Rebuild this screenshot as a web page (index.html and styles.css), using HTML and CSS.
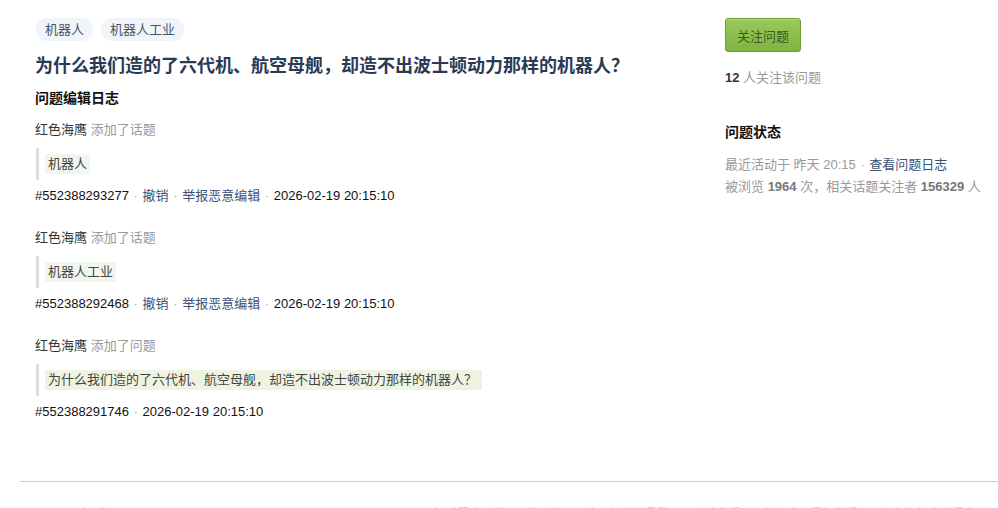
FILE: index.html
```html
<!DOCTYPE HTML>
<html lang="zh-CN">
<head>
<meta charset="utf-8" />
<meta name="viewport" content="width=device-width, initial-scale=1.0">
<title>问题编辑日志</title>
<link rel="stylesheet" href="styles.css">
</head>
<body>
<div class="wrap">
  <div class="main">
    <div class="tags">
      <a class="tag" href="#">机器人</a>
      <a class="tag" href="#">机器人工业</a>
    </div>
    <h1 class="title">为什么我们造的了六代机、航空母舰，却造不出波士顿动力那样的机器人？</h1>
    <h2 class="sub">问题编辑日志</h2>

    <div class="log">
      <div class="who">红色海鹰 <span class="act">添加了话题</span></div>
      <div class="quote"><span class="hl">机器人</span></div>
      <div class="meta">#552388293277 <span class="dot">·</span> <a href="#">撤销</a> <span class="dot">·</span> <a href="#">举报恶意编辑</a> <span class="dot">·</span> 2026-02-19 20:15:10</div>
    </div>

    <div class="log">
      <div class="who">红色海鹰 <span class="act">添加了话题</span></div>
      <div class="quote"><span class="hl">机器人工业</span></div>
      <div class="meta">#552388292468 <span class="dot">·</span> <a href="#">撤销</a> <span class="dot">·</span> <a href="#">举报恶意编辑</a> <span class="dot">·</span> 2026-02-19 20:15:10</div>
    </div>

    <div class="log">
      <div class="who">红色海鹰 <span class="act">添加了问题</span></div>
      <div class="quote"><span class="hl ins">为什么我们造的了六代机、航空母舰，却造不出波士顿动力那样的机器人？</span></div>
      <div class="meta">#552388291746 <span class="dot">·</span> 2026-02-19 20:15:10</div>
    </div>
  </div>

  <div class="side">
    <button class="follow">关注问题</button>
    <p class="count"><b>12</b> 人关注该问题</p>
    <h3 class="side-title">问题状态</h3>
    <p class="stat">最近活动于 昨天 20:15 <span class="dot">·</span> <a href="#">查看问题日志</a></p>
    <p class="stat">被浏览 <b>1964</b> 次，相关话题关注者 <b>156329</b> 人</p>
  </div>
</div>

<div class="footer">
  <span>© 2026 知乎</span>
  <span class="links">知乎圆桌 · 发现 · 移动应用 · 使用机构帐号登录 · 联系我们 · 工作机会 · 侵权举报 · 网上有害信息举报专区</span>
</div>
</body>
</html>
```

FILE: styles.css
```css
body {
  margin: 0;
  font-family: "Liberation Sans", "Noto Sans CJK SC", sans-serif;
  font-size: 13px;
  color: #222;
  background: #fff;
}
a {
  text-decoration: none;
  color: #3d5377;
}
.wrap {
  display: flex;
  padding: 18px 0 0 35px;
  height: 481px;
  box-sizing: border-box;
}
.main {
  width: 690px;
}
.side {
  width: 260px;
}

/* topic tags */
.tags {
  display: flex;
  gap: 8px;
  margin-left: 1px;
}
.tag {
  display: block;
  height: 23px;
  line-height: 23px;
  padding: 0 9px;
  border-radius: 12px;
  background: #eff5fa;
  color: #4a5666;
}
.title {
  margin: 12px 0 0;
  font-size: 18px;
  line-height: 26px;
  color: #2a3a55;
}
.sub {
  margin: 9px 0 0;
  font-size: 14px;
  line-height: 20px;
  color: #111;
}

/* log entries */
.log {
  margin-top: 12px;
}
.log + .log {
  margin-top: 22px;
}
.who {
  line-height: 20px;
  color: #333;
}
.act {
  color: #999;
}
.quote {
  margin: 8px 0 0 1px;
  padding: 6px 0 6px 6px;
  border-left: 3px solid #ddd;
}
.hl {
  display: inline-block;
  padding: 0 3px;
  line-height: 20px;
  background: #f1f6ee;
  color: #444;
}
.hl.ins {
  background: #eff4e2;
  padding-right: 5px;
}
.meta {
  margin-top: 6px;
  line-height: 20px;
  color: #111;
}
.dot {
  color: #aaa;
  padding: 0 1px;
}

/* sidebar */
.follow {
  display: block;
  height: 34px;
  padding: 0 11px;
  border: 1px solid #6f9a3a;
  border-radius: 3px;
  background: linear-gradient(#9ac95a, #80b342);
  color: #3c5a1c;
  font: 13px "Liberation Sans", "Noto Sans CJK SC", sans-serif;
  box-shadow: inset 0 1px 0 rgba(255,255,255,0.25);
}
.count {
  margin: 16px 0 0;
  line-height: 20px;
  color: #999;
}
.count b {
  color: #333;
}
.side-title {
  margin: 34px 0 0;
  font-size: 14px;
  line-height: 20px;
  color: #111;
}
.side-title + .stat {
  margin-top: 13px;
}
.stat {
  margin: 2px 0 0;
  line-height: 20px;
  color: #999;
}
.stat b {
  color: #777;
}

/* footer */
.footer {
  margin-left: 20px;
  border-top: 1px solid #ccc;
  padding: 22px 0 0 20px;
  display: flex;
  justify-content: space-between;
  font-size: 12px;
  color: #ccc;
}
.footer .links {
  padding-right: 10px;
}
```
